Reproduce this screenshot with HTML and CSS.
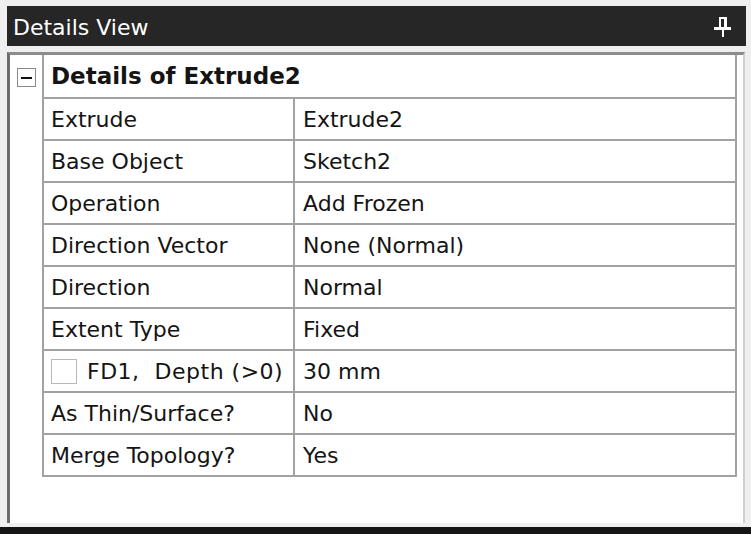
FILE: index.html
```html
<!DOCTYPE html>
<html>
<head>
<meta charset="utf-8">
<link rel="stylesheet" href="styles.css">
</head>
<body>
<div class="panel">
  <div class="titlebar">
    <span class="title">Details View</span>
    <svg class="pin" width="18" height="22" viewBox="0 0 18 22">
      <rect x="5" y="1" width="8" height="2" fill="#fff"/>
      <rect x="5" y="1" width="2" height="11" fill="#fff"/>
      <rect x="10" y="1" width="3" height="11" fill="#fff"/>
      <rect x="0" y="11" width="17" height="3" fill="#fff"/>
      <rect x="8" y="13" width="2" height="8" fill="#fff"/>
    </svg>
  </div>
  <div class="frame">
    <div class="content">
      <div class="tree">
        <div class="toggle"><span class="minus"></span></div>
      </div>
      <div class="grid">
        <div class="head">Details of Extrude2</div>
        <div class="row"><div class="k">Extrude</div><div class="v">Extrude2</div></div>
        <div class="row"><div class="k">Base Object</div><div class="v">Sketch2</div></div>
        <div class="row"><div class="k">Operation</div><div class="v">Add Frozen</div></div>
        <div class="row"><div class="k">Direction Vector</div><div class="v">None (Normal)</div></div>
        <div class="row"><div class="k">Direction</div><div class="v">Normal</div></div>
        <div class="row"><div class="k">Extent Type</div><div class="v">Fixed</div></div>
        <div class="row"><div class="k kcheck"><span class="check"></span><span class="klabel">FD1,&nbsp; Depth (&gt;0)</span></div><div class="v">30 mm</div></div>
        <div class="row"><div class="k">As Thin/Surface?</div><div class="v">No</div></div>
        <div class="row"><div class="k">Merge Topology?</div><div class="v">Yes</div></div>
      </div>
    </div>
  </div>
  <div class="bottom"></div>
</div>
</body>
</html>
```

FILE: styles.css
```css
html, body {
  margin: 0;
  padding: 0;
  background: #efefef;
}
body {
  width: 751px;
  height: 534px;
  overflow: hidden;
  font-family: "DejaVu Sans", Verdana, sans-serif;
  font-size: 22px;
  color: #141414;
}
.panel {
  width: 751px;
  height: 534px;
  display: flex;
  flex-direction: column;
  padding-top: 6px;
  box-sizing: border-box;
}
.titlebar {
  height: 40px;
  margin: 0 5px 0 7px;
  background: #262626;
  color: #fff;
  display: flex;
  align-items: center;
  justify-content: space-between;
  padding: 0 14px 0 6px;
}
.title {
  font-size: 22px;
  margin-top: 2px;
}
.pin {
  display: block;
  margin-top: 2px;
}
.frame {
  margin: 6px 6px 0 7px;
  flex: 1;
  border-top: 3px solid #8c8c8c;
  border-left: 3px solid #6c6c6c;
  border-right: 2px solid #cfcfcf;
  background: #fff;
  display: flex;
  flex-direction: column;
}
.content {
  display: flex;
}
.tree {
  width: 32px;
  flex: none;
}
.toggle {
  width: 19px;
  height: 19px;
  box-sizing: border-box;
  border: 1px solid #8a8a8a;
  background: #fff;
  margin: 13px 0 0 7px;
  display: flex;
  align-items: center;
  justify-content: center;
}
.minus {
  display: block;
  width: 11px;
  height: 2px;
  background: #111;
}
.grid {
  width: 695px;
  flex: none;
  border-left: 2px solid #a2a2a2;
  border-right: 2px solid #a2a2a2;
  border-bottom: 2px solid #a2a2a2;
  box-sizing: border-box;
}
.head {
  height: 42px;
  border-bottom: 2px solid #a2a2a2;
  font-weight: bold;
  font-size: 23px;
  display: flex;
  align-items: center;
  padding-left: 7px;
}
.row {
  display: flex;
  height: 40px;
  border-bottom: 2px solid #a2a2a2;
}
.row:last-child {
  border-bottom: none;
}
.k {
  width: 242px;
  flex: none;
  border-right: 2px solid #a2a2a2;
  display: flex;
  align-items: center;
  padding-left: 7px;
  white-space: nowrap;
}
.kcheck {
  gap: 10px;
}
.klabel {
  letter-spacing: 0.5px;
}
.check {
  display: block;
  width: 26px;
  height: 25px;
  border: 1px solid #b8b8b8;
  box-sizing: border-box;
  background: #fff;
}
.v {
  flex: 1;
  display: flex;
  align-items: center;
  padding-left: 8px;
  white-space: nowrap;
}
.bottom {
  height: 7px;
  margin-top: 4px;
  background: #151515;
}
```
